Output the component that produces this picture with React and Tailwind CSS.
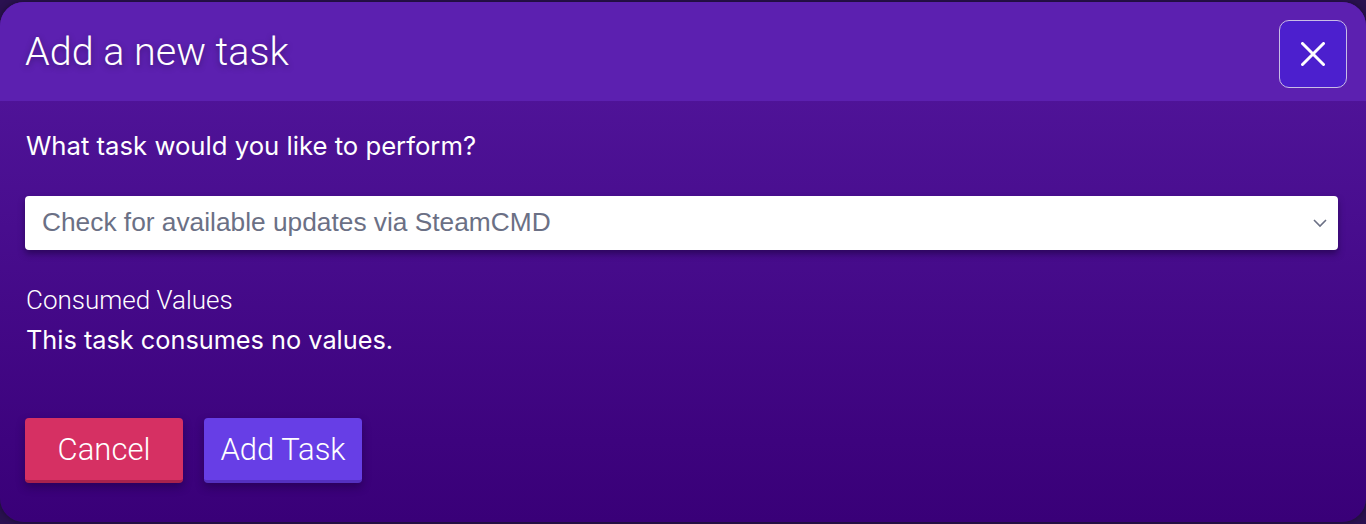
import React from "react";

export default function App() {
  return (
    <div className="w-[1366px] h-[524px] bg-[#2a1150] pt-[2px] pb-[2px] overflow-hidden">
      <div className="h-[520px] rounded-[24px] overflow-hidden flex flex-col bg-gradient-to-b from-[#54179f] to-[#390078] shadow-[0_0_6px_rgba(0,0,0,0.4)]">
        <div className="h-[99px] bg-[#5c20b0] flex items-center justify-between pl-[25px] pr-[19px] shrink-0">
          <h1 className="text-[39.5px] font-light text-white leading-none mt-[1px] [text-shadow:0_2px_6px_rgba(0,0,0,0.35)] font-['Roboto',sans-serif]">
            Add a new task
          </h1>
          <button className="w-[68px] h-[68px] mt-[5px] rounded-[10px] bg-[#4c1fce] border border-[#c9bde6] flex items-center justify-center">
            <svg width="24" height="24" viewBox="0 0 24 24" fill="none" stroke="white" strokeWidth="3" strokeLinecap="round">
              <path d="M1.5 1.5L22.5 22.5M22.5 1.5L1.5 22.5" />
            </svg>
          </button>
        </div>
        <div className="flex flex-col px-[25px] pt-[29px] font-['Inter',sans-serif]">
          <p className="text-[25.7px] text-white leading-[32px] pl-[1px]">What task would you like to perform?</p>
          <div className="mt-[34px] mr-[3px] h-[54px] bg-white rounded-[4px] shadow-[0_4px_6px_rgba(20,0,50,0.5)] flex items-center justify-between pl-[17px] pr-[10px]">
            <span className="text-[26.3px] text-[#6b7085] font-['Liberation_Sans',sans-serif]">Check for available updates via SteamCMD</span>
            <svg width="16" height="10" viewBox="0 0 16 10" fill="none" stroke="#6b7085" strokeWidth="1.6">
              <path d="M2 2L8 8L14 2" />
            </svg>
          </div>
          <p className="mt-[34px] text-[26px] font-light text-white leading-[32px] pl-[1px] font-['Roboto',sans-serif]">Consumed Values</p>
          <p className="mt-[8px] text-[25.3px] text-white leading-[32px] pl-[1px]">This task consumes no values.</p>
          <div className="mt-[62px] flex gap-[21px] font-['Roboto',sans-serif]">
            <button className="w-[158px] h-[65px] pt-[3px] rounded-[4px] bg-[#d63063] border-b-[3px] border-[#a9224d] text-white text-[31px] font-light shadow-[0_4px_8px_rgba(20,0,50,0.45)] flex items-center justify-center">
              Cancel
            </button>
            <button className="w-[158px] h-[65px] pt-[3px] rounded-[4px] bg-[#673ee6] border-b-[3px] border-[#5530c0] text-white text-[31px] font-light shadow-[0_4px_8px_rgba(20,0,50,0.45)] flex items-center justify-center">
              Add Task
            </button>
          </div>
        </div>
      </div>
    </div>
  );
}
